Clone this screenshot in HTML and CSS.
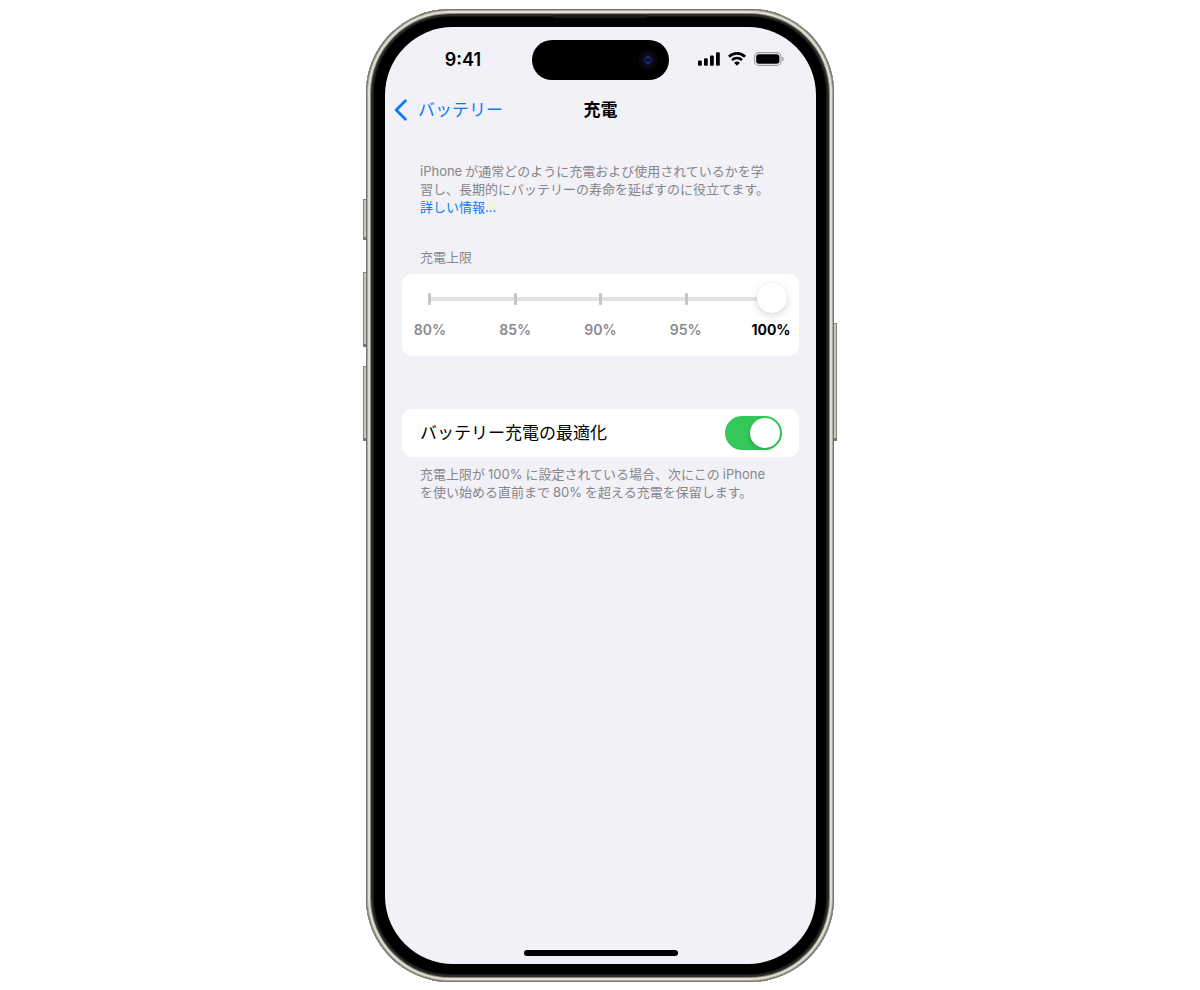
FILE: index.html
```html
<!DOCTYPE html>
<html lang="ja">
<head>
<meta charset="utf-8">
<meta name="viewport" content="width=device-width, initial-scale=1">
<title>充電</title>
<link rel="stylesheet" href="styles.css">
</head>
<body>
<div class="device">
  <span class="key key-action"></span>
  <span class="key key-up"></span>
  <span class="key key-down"></span>
  <span class="key key-side"></span>
  <span class="speaker"></span>
  <div class="screen">
    <div class="status-bar">
      <span class="time">9:41</span>
      <div class="island">
        <svg class="camera" width="22" height="22" viewBox="0 0 22 22" aria-hidden="true">
          <circle cx="11" cy="11" r="10" fill="#08070d"/>
          <circle cx="11" cy="11" r="6.5" fill="#0b0c24"/>
          <circle cx="11" cy="11" r="4.5" fill="#10174a"/>
          <circle cx="11" cy="8.7" r="1.4" fill="#26336c"/>
          <circle cx="11" cy="13.3" r="1.4" fill="#26336c"/>
          <circle cx="11" cy="11" r="1.2" fill="#060817"/>
        </svg>
      </div>
      <div class="indicators">
        <svg width="22" height="14" viewBox="0 0 22 14" aria-hidden="true">
          <rect x="0" y="8.6" width="3.8" height="5.2" rx="1.1"/>
          <rect x="6" y="6.2" width="3.8" height="7.6" rx="1.1"/>
          <rect x="12" y="3.4" width="3.8" height="10.4" rx="1.1"/>
          <rect x="18" y="0.2" width="3.8" height="13.6" rx="1.1"/>
        </svg>
        <svg width="18" height="14" viewBox="0 0 18 14" aria-hidden="true">
          <path d="M1 4.7a11.3 11.3 0 0 1 16 0" fill="none" stroke="#000" stroke-width="2.7"/>
          <path d="M4 8.1a7 7 0 0 1 10 0" fill="none" stroke="#000" stroke-width="2.5"/>
          <path d="M9 13.7 6.1 10.8a4.2 4.2 0 0 1 5.8 0z"/>
        </svg>
        <svg width="31" height="14" viewBox="0 0 31 14" aria-hidden="true">
          <rect x="0.6" y="0.6" width="26.4" height="12.8" rx="4.2" fill="none" stroke="#9d9ca1" stroke-width="1.1"/>
          <rect x="2.2" y="2.2" width="23.2" height="9.6" rx="2.7"/>
          <path d="M28.2 4.8v4.6c1-.4 1.5-1.2 1.5-2.3s-.5-1.9-1.5-2.3z" fill="#9d9ca1"/>
        </svg>
      </div>
    </div>

    <header class="nav">
      <button class="back" type="button">
        <svg width="13" height="22" viewBox="0 0 13 22" aria-hidden="true"><path d="M11.4 1.8 2.2 11l9.2 9.2" fill="none" stroke="#0a7aff" stroke-width="2.8" stroke-linecap="round" stroke-linejoin="round"/></svg>
        <span>バッテリー</span>
      </button>
      <h1 class="title">充電</h1>
    </header>

    <main class="content">
      <p class="note intro"><span class="latin-start">iPhone</span>が通常どのように充電および使用されているかを学<br>習し、長期的にバッテリーの寿命を延ばすのに役立てます。<br><a class="more" href="#">詳しい情報...</a></p>

      <label class="note limit-label" for="limit">充電上限</label>
      <section class="card limit">
        <div class="slider">
          <div class="ticks"><i></i><i></i><i></i><i></i><i></i></div>
          <input class="range" id="limit" type="range" min="80" max="100" step="5" value="100">
        </div>
        <div class="marks">
          <span>80%</span><span>85%</span><span>90%</span><span>95%</span><span class="current">100%</span>
        </div>
      </section>

      <section class="card option">
        <label for="optimize">バッテリー充電の最適化</label>
        <input class="switch" id="optimize" type="checkbox" role="switch" checked>
      </section>
      <p class="note">充電上限が<span class="latin">100%</span>に設定されている場合、次にこの<span class="latin">iPhone</span><br>を使い始める直前まで<span class="latin">80%</span>を超える充電を保留します。</p>
    </main>
    <div class="home-bar"></div>
  </div>
</div>
</body>
</html>
```
FILE: styles.css
```css
* { box-sizing: border-box; }

body {
  margin: 0;
  padding: 9px 8px 8px;
  min-height: 100vh;
  display: flex;
  justify-content: center;
  background: #fff;
  color: #000;
  font-family: Inter, "Noto Sans CJK JP", sans-serif;
}

.device {
  position: relative;
  display: flex;
  width: 100%;
  max-width: 468px;
  padding: 18px 18px 18px 19px;
  border-radius: 84px;
  background: #000;
  box-shadow:
    inset 0 0 0 1px #77746d,
    inset 0 0 0 2px #aaa79f,
    inset 0 0 0 4px #e2dfd5,
    inset 0 0 0 5px #8b8982,
    inset 0 0 0 7px #2b2b2a,
    inset 0 0 0 8px #151515;
}

.key {
  position: absolute;
  left: -3px;
  width: 3px;
  border: 1px solid #85827b;
  border-right: 0;
  border-bottom: 3px solid #77746d;
  border-radius: 1px 0 0 1px;
  background: #c9c6bf;
}
.key-action { top: 190px; height: 41px; }
.key-up { top: 263px; height: 75px; }
.key-down { top: 357px; height: 75px; }
.key-side {
  left: auto;
  right: -3px;
  top: 314px;
  height: 118px;
  border-left: 0;
  border-right: 1px solid #85827b;
  border-radius: 0 1px 1px 0;
}

.speaker {
  position: absolute;
  top: 6px;
  left: 40%;
  right: 40%;
  height: 3px;
  border-radius: 2px;
  background: #171a18;
}

.screen {
  flex: 1;
  min-width: 0;
  display: flex;
  flex-direction: column;
  padding: 13px 0 8px;
  border-radius: 68px;
  background: #f2f1f7;
}

.status-bar {
  display: grid;
  grid-template-columns: 1fr 137px 1fr;
  align-items: center;
}
.time {
  padding-left: 9px;
  text-align: center;
  font-size: 18px;
  font-weight: 600;
  line-height: 24px;
}
.island {
  display: flex;
  align-items: center;
  justify-content: flex-end;
  height: 40px;
  padding-right: 10px;
  border-radius: 20px;
  background: #000;
}
.indicators {
  display: flex;
  align-items: center;
  justify-content: center;
  gap: 8px;
  padding: 0 2px 2px 0;
}

.nav {
  display: grid;
  grid-template-columns: 1fr auto 1fr;
  align-items: center;
  height: 44px;
  margin-top: 8px;
  padding: 0 9px;
}
.back {
  display: flex;
  align-items: center;
  justify-self: start;
  gap: 11px;
  padding: 0;
  border: 0;
  background: none;
  color: #0a7aff;
  font-family: inherit;
  font-size: 17px;
  line-height: 24px;
}
.title {
  margin: 0;
  font-size: 17px;
  font-weight: 700;
  line-height: 24px;
}

.content {
  flex: 1;
  display: flex;
  flex-direction: column;
  padding: 30px 17px 0;
}
.note {
  margin: 0;
  padding-left: 18px;
  color: #85858a;
  font-size: 13px;
  line-height: 18px;
  white-space: nowrap;
}
.latin { margin: 0 3px; }
.latin-start { margin-right: 3px; }
.more {
  color: #0a7aff;
  text-decoration: none;
}
.limit-label { margin-top: 32px; }

.card {
  border-radius: 10px;
  background: #fff;
}
.limit {
  margin-top: 8px;
  padding: 8px 8px 17px;
}
.slider {
  display: grid;
  align-items: center;
  padding: 0 4px;
}
.ticks, .range { grid-area: 1 / 1; }
.ticks {
  display: flex;
  align-items: center;
  justify-content: space-between;
  height: 12px;
  margin: 2px 14px 0;
  background: linear-gradient(#e2e2e4, #e2e2e4) center / 100% 4px no-repeat;
}
.ticks i {
  width: 3px;
  height: 12px;
  border-radius: 1px;
  background: #c5c5c9;
}
.range {
  appearance: none;
  width: 100%;
  height: 32px;
  margin: 0;
  background: none;
}
.range::-webkit-slider-thumb {
  appearance: none;
  width: 30px;
  height: 30px;
  border-radius: 50%;
  background: #fff;
  box-shadow: 0 3px 8px rgba(0, 0, 0, 0.14), 0 0 2px rgba(0, 0, 0, 0.1);
}
.marks {
  display: flex;
  justify-content: space-between;
  margin-top: 7px;
  color: #8a8a8e;
  font-size: 14px;
  font-weight: 600;
  line-height: 18px;
}
.marks span {
  display: flex;
  justify-content: center;
  width: 40px;
}
.marks .current {
  color: #000;
  font-weight: 700;
}

.option {
  display: flex;
  align-items: center;
  justify-content: space-between;
  margin: 53px 0 8px;
  padding: 7px 17px 7px 18px;
  font-size: 17px;
  line-height: 24px;
}
.switch {
  appearance: none;
  display: flex;
  justify-content: flex-end;
  width: 57px;
  height: 34px;
  margin: 0;
  padding: 2px;
  border-radius: 17px;
  background: #34c759;
}
.switch::before {
  content: "";
  width: 30px;
  height: 30px;
  border-radius: 50%;
  background: #fff;
  box-shadow: -1px 2px 4px rgba(0, 0, 0, 0.16);
}
.switch:not(:checked) {
  justify-content: flex-start;
  background: #e9e9eb;
}

.home-bar {
  align-self: center;
  width: 154px;
  height: 6px;
  border-radius: 3px;
  background: #000;
}
```
